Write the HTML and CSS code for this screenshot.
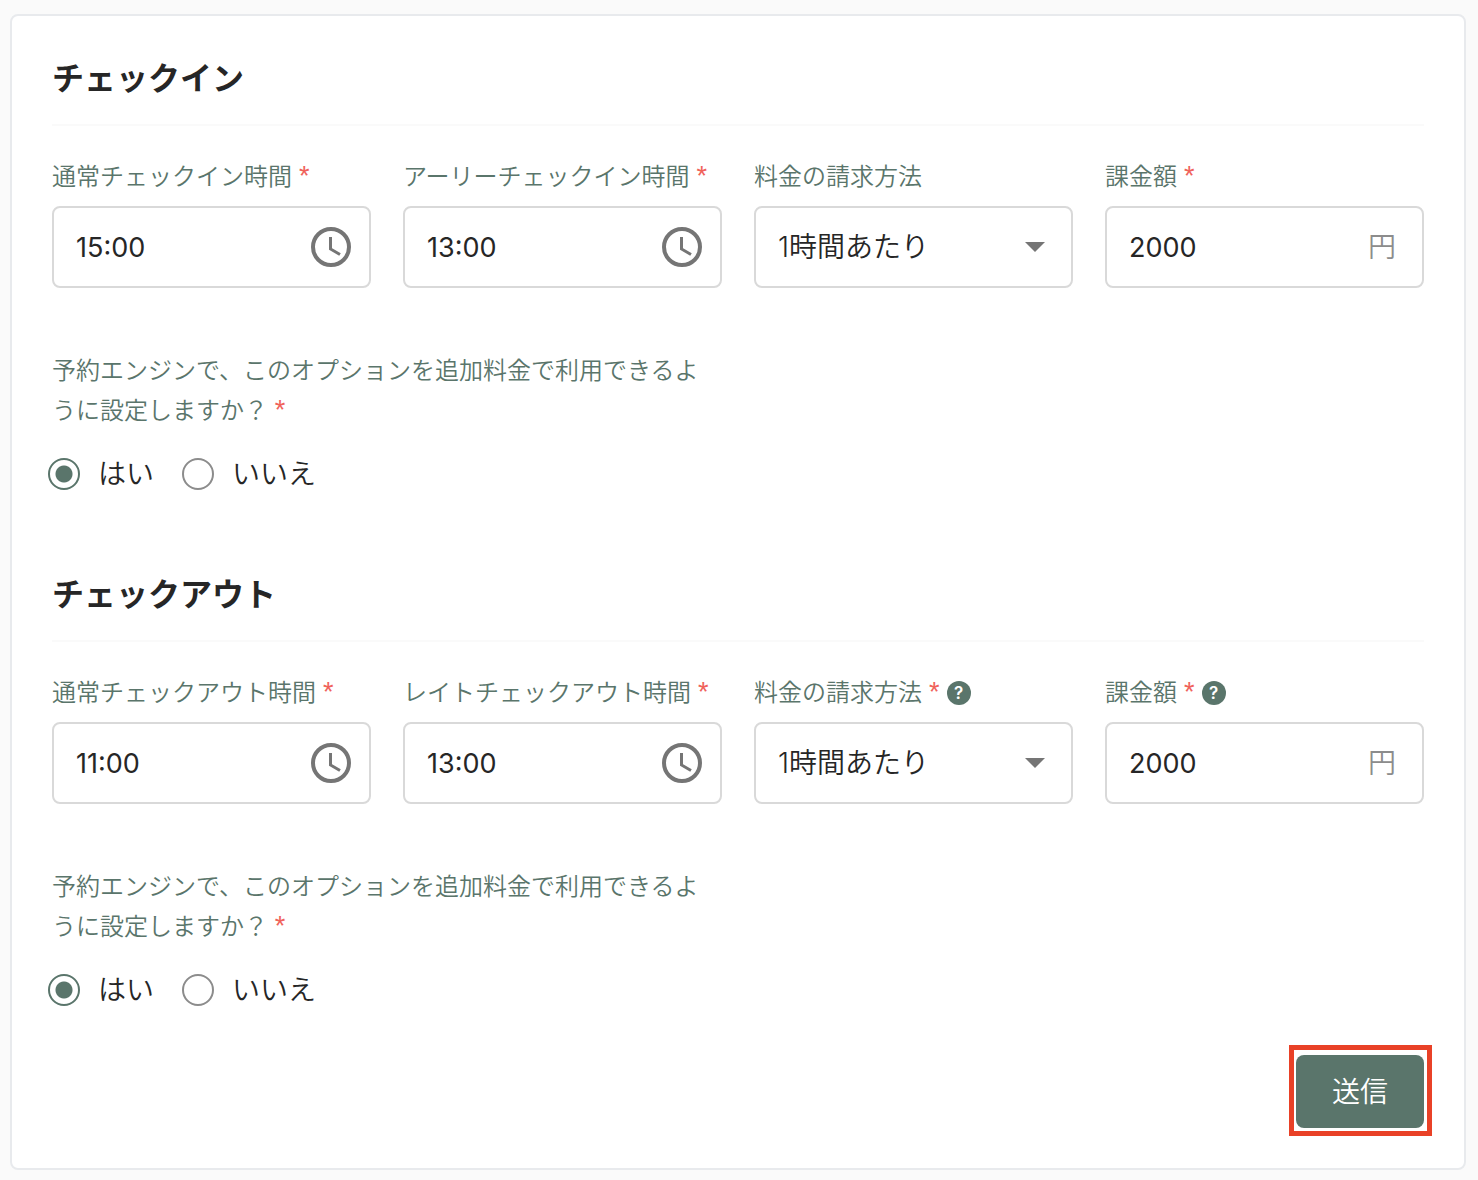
FILE: index.html
```html
<!DOCTYPE html>
<html lang="ja">
<head>
    <meta charset="UTF-8">
    <meta name="viewport" content="width=device-width, initial-scale=1.0">
    <title>チェックイン・チェックアウト</title>
    <link rel="stylesheet" href="styles.css">
</head>
<body>
    <form class="card">
        <section class="section">
            <h2>チェックイン</h2>
            <div class="fields">
                <div class="field">
                    <div class="field-label">
                        <label for="checkinTime">通常チェックイン時間</label>
                        <span class="required">*</span>
                    </div>
                    <div class="control">
                        <input type="text" id="checkinTime" value="15:00">
                        <svg class="clock" viewBox="0 0 40 40"><circle cx="20" cy="20" r="18"/><path d="M19.500 10v12l9.500 5.500"/></svg>
                    </div>
                </div>
                <div class="field">
                    <div class="field-label">
                        <label for="earlyTime">アーリーチェックイン時間</label>
                        <span class="required">*</span>
                    </div>
                    <div class="control">
                        <input type="text" id="earlyTime" value="13:00">
                        <svg class="clock" viewBox="0 0 40 40"><circle cx="20" cy="20" r="18"/><path d="M19.500 10v12l9.500 5.500"/></svg>
                    </div>
                </div>
                <div class="field">
                    <div class="field-label">
                        <label for="earlyMethod">料金の請求方法</label>
                    </div>
                    <div class="control">
                        <select id="earlyMethod">
                            <option>1時間あたり</option>
                        </select>
                        <svg class="arrow" viewBox="0 0 20 10"><path d="M0 0h20L10 10z"/></svg>
                    </div>
                </div>
                <div class="field">
                    <div class="field-label">
                        <label for="earlyPrice">課金額</label>
                        <span class="required">*</span>
                    </div>
                    <div class="control">
                        <input type="text" id="earlyPrice" value="2000">
                        <span class="unit">円</span>
                    </div>
                </div>
            </div>
            <fieldset class="question">
                <legend>予約エンジンで、このオプションを追加料金で利用できるように設定しますか？ <span class="required">*</span></legend>
                <div class="radios">
                    <label><input type="radio" name="early" value="yes" checked><span>はい</span></label>
                    <label><input type="radio" name="early" value="no"><span>いいえ</span></label>
                </div>
            </fieldset>
        </section>

        <section class="section">
            <h2>チェックアウト</h2>
            <div class="fields">
                <div class="field">
                    <div class="field-label">
                        <label for="checkoutTime">通常チェックアウト時間</label>
                        <span class="required">*</span>
                    </div>
                    <div class="control">
                        <input type="text" id="checkoutTime" value="11:00">
                        <svg class="clock" viewBox="0 0 40 40"><circle cx="20" cy="20" r="18"/><path d="M19.500 10v12l9.500 5.500"/></svg>
                    </div>
                </div>
                <div class="field">
                    <div class="field-label">
                        <label for="lateTime">レイトチェックアウト時間</label>
                        <span class="required">*</span>
                    </div>
                    <div class="control">
                        <input type="text" id="lateTime" value="13:00">
                        <svg class="clock" viewBox="0 0 40 40"><circle cx="20" cy="20" r="18"/><path d="M19.500 10v12l9.500 5.500"/></svg>
                    </div>
                </div>
                <div class="field">
                    <div class="field-label">
                        <label for="lateMethod">料金の請求方法</label>
                        <span class="required">*</span>
                        <button type="button" class="help">?</button>
                    </div>
                    <div class="control">
                        <select id="lateMethod">
                            <option>1時間あたり</option>
                        </select>
                        <svg class="arrow" viewBox="0 0 20 10"><path d="M0 0h20L10 10z"/></svg>
                    </div>
                </div>
                <div class="field">
                    <div class="field-label">
                        <label for="latePrice">課金額</label>
                        <span class="required">*</span>
                        <button type="button" class="help">?</button>
                    </div>
                    <div class="control">
                        <input type="text" id="latePrice" value="2000">
                        <span class="unit">円</span>
                    </div>
                </div>
            </div>
            <fieldset class="question">
                <legend>予約エンジンで、このオプションを追加料金で利用できるように設定しますか？ <span class="required">*</span></legend>
                <div class="radios">
                    <label><input type="radio" name="late" value="yes" checked><span>はい</span></label>
                    <label><input type="radio" name="late" value="no"><span>いいえ</span></label>
                </div>
            </fieldset>
        </section>

        <div class="actions">
            <div class="highlight">
                <button type="submit" class="submit-btn">送信</button>
            </div>
        </div>
    </form>
</body>
</html>
```
FILE: styles.css
```css
* {
    box-sizing: border-box;
}
body {
    margin: 14px 12px 10px 10px;
    background-color: #fafafa;
    color: #262626;
    font-family: Inter, "Noto Sans CJK JP", sans-serif;
    font-size: 28px;
    font-weight: 350;
}
input, select, button {
    font: inherit;
    color: inherit;
}
.card {
    padding: 43px 40px 32px;
    background: white;
    border: 2px solid #e8eaed;
    border-radius: 8px;
}
.section + .section {
    margin-top: 85px;
}
h2 {
    margin: 0 0 31px;
    padding-bottom: 25px;
    border-bottom: 2px solid #fafafa;
    font-size: 32px;
    font-weight: 700;
    line-height: 40px;
}
.fields {
    display: grid;
    grid-template-columns: repeat(4, minmax(0, 1fr));
    gap: 32px;
}
.field-label {
    display: flex;
    align-items: baseline;
    gap: 7px;
    height: 40px;
    margin-bottom: 9px;
    font-size: 24px;
    line-height: 40px;
    color: #5a756b;
    white-space: nowrap;
}
.required {
    color: #f0625a;
    font-family: "Liberation Sans", Arial, sans-serif;
    font-size: 27px;
    font-weight: 400;
    line-height: 28px;
}
.help {
    align-self: center;
    width: 24px;
    height: 24px;
    padding: 0;
    border: none;
    border-radius: 50%;
    background-color: #5a756b;
    color: white;
    font-size: 17px;
    font-weight: 600;
    line-height: 24px;
}
.control {
    display: flex;
    align-items: center;
    position: relative;
    height: 82px;
    border: 2px solid #d9d9d9;
    border-radius: 8px;
}
.control input, .control select {
    flex: 1;
    min-width: 0;
    height: 100%;
    padding: 0 0 0 22px;
    border: none;
    border-radius: 8px;
    background: none;
    appearance: none;
}
.control input {
    font-size: 27px;
    font-weight: 400;
}
.clock {
    width: 40px;
    height: 40px;
    margin-right: 18px;
    fill: none;
    stroke: #757575;
    stroke-width: 4;
}
.clock path {
    stroke-width: 3;
}
.arrow {
    position: absolute;
    right: 26px;
    width: 20px;
    height: 10px;
    fill: #757575;
    pointer-events: none;
}
.unit {
    margin-right: 26px;
    padding-bottom: 4px;
    color: #8c8c8c;
}
.question {
    margin: 63px 0 0;
    padding: 0;
    border: none;
    max-width: calc(50% - 16px);
}
.question legend {
    padding: 0;
    font-size: 24px;
    line-height: 40px;
    color: #5a756b;
}
.radios {
    display: flex;
    gap: 28px;
    margin: 27px 0 0 -4px;
}
.radios label {
    display: flex;
    align-items: center;
    gap: 18px;
    height: 32px;
}
.radios span {
    padding-bottom: 4px;
}
.radios input {
    width: 32px;
    height: 32px;
    margin: 0;
    border: 2px solid #8c8c8c;
    border-radius: 50%;
    appearance: none;
}
.radios input:checked {
    border-color: #5a756b;
    background: radial-gradient(circle, #5a756b 8px, transparent 9px);
}
.actions {
    display: flex;
    justify-content: flex-end;
    margin: 39px -8px 0 0;
}
.highlight {
    padding: 5px 3px 3px 2px;
    border: 5px solid #e94127;
}
.submit-btn {
    display: block;
    width: 128px;
    height: 73px;
    padding: 0 0 4px;
    border: none;
    border-radius: 8px;
    background-color: #5a756b;
    color: white;
    cursor: pointer;
}
```
